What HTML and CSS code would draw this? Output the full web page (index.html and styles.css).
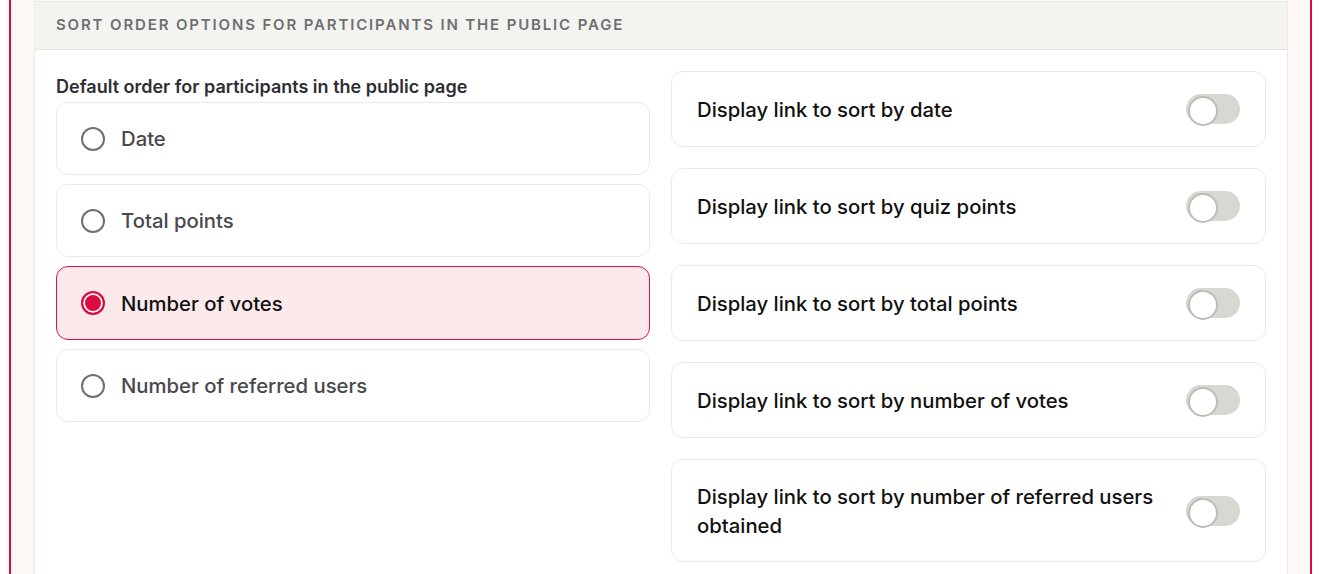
FILE: index.html
```html
<!DOCTYPE html>
<html lang="en">
<head>
    <meta charset="UTF-8">
    <meta name="viewport" content="width=device-width, initial-scale=1.0">
    <title>Sort order options</title>
    <link rel="stylesheet" href="styles.css">
</head>
<body>
    <div class="frame">
        <div class="panel">
            <div class="panel-header">Sort order options for participants in the public page</div>

            <div class="panel-body">
                <div class="column">
                    <div class="field-label">Default order for participants in the public page</div>
                    <div class="options">
                        <label class="option">
                            <span class="radio"></span>
                            Date
                        </label>
                        <label class="option">
                            <span class="radio"></span>
                            Total points
                        </label>
                        <label class="option selected">
                            <span class="radio"></span>
                            Number of votes
                        </label>
                        <label class="option">
                            <span class="radio"></span>
                            Number of referred users
                        </label>
                    </div>
                </div>

                <div class="column switches">
                    <div class="switch-row">
                        <span>Display link to sort by date</span>
                        <span class="toggle"></span>
                    </div>
                    <div class="switch-row">
                        <span>Display link to sort by quiz points</span>
                        <span class="toggle"></span>
                    </div>
                    <div class="switch-row">
                        <span>Display link to sort by total points</span>
                        <span class="toggle"></span>
                    </div>
                    <div class="switch-row">
                        <span>Display link to sort by number of votes</span>
                        <span class="toggle"></span>
                    </div>
                    <div class="switch-row tall">
                        <span>Display link to sort by number of referred users obtained</span>
                        <span class="toggle"></span>
                    </div>
                </div>
            </div>
        </div>
    </div>
</body>
</html>
```

FILE: styles.css
```css
* {
    box-sizing: border-box;
}

body {
    font-family: Inter, "Noto Sans", sans-serif;
    margin: 0;
    padding: 0;
    background-color: #ffffff;
    color: #222;
}

.frame {
    margin-left: 9px;
    width: 1303px;
    min-height: 574px;
    border-left: 2px solid #dc0a3f;
    border-right: 2px solid #dc0a3f;
    background-color: #fdf8f5;
    padding: 1px 22px 0 23px;
}

.panel {
    background-color: #ffffff;
    border: 1px solid #ebebe6;
    border-radius: 0 0 12px 12px;
    min-height: 600px;
}

.panel-header {
    background-color: #f3f3ef;
    border-bottom: 1px solid #e6e6e0;
    height: 48px;
    line-height: 46px;
    padding: 0 21px;
    font-size: 15px;
    font-weight: 600;
    letter-spacing: 1.85px;
    text-transform: uppercase;
    color: #6f6f73;
}

.panel-body {
    display: grid;
    grid-template-columns: 594px 595px;
    column-gap: 21px;
    padding: 21px 21px 0 21px;
}

.field-label {
    font-size: 18px;
    font-weight: 600;
    color: #2e2e33;
    margin-top: 5px;
    line-height: 22px;
    margin-bottom: 4px;
}

.options {
    display: flex;
    flex-direction: column;
    gap: 9px;
}

.option {
    display: flex;
    align-items: center;
    gap: 16px;
    height: 73px;
    padding: 0 24px;
    border: 1px solid #ebebe6;
    border-radius: 12px;
    font-size: 20.3px;
    font-weight: 500;
    color: #48484d;
}

.option .radio {
    width: 24px;
    height: 24px;
    border: 2px solid #707070;
    border-radius: 50%;
    background-color: #ffffff;
}

.option.selected {
    background-color: #fbe9ec;
    border-color: #d8124a;
    color: #111;
    height: 74px;
}

.option.selected .radio {
    border-color: #dc0a3f;
    box-shadow: inset 0 0 0 2px #ffffff;
    background-color: #dc0a3f;
}

.switches {
    display: flex;
    flex-direction: column;
    gap: 21px;
}

.switch-row {
    display: flex;
    align-items: center;
    justify-content: space-between;
    height: 76px;
    padding: 0 25px;
    border: 1px solid #ebebe6;
    border-radius: 12px;
    font-size: 20.3px;
    font-weight: 500;
    color: #111;
    line-height: 29px;
}

.switch-row.tall {
    height: 103px;
}

.switch-row.tall span:first-child {
    max-width: 470px;
}

.toggle {
    position: relative;
    flex-shrink: 0;
    width: 54px;
    height: 30px;
    border-radius: 15px;
    background-color: #d8d8d2;
}

/* knob sits over the track */
.toggle::after {
    content: "";
    position: absolute;
    left: 2px;
    top: 2px;
    width: 26px;
    height: 26px;
    border-radius: 50%;
    background-color: #ffffff;
    border: 2px solid #bdbdb7;
}
```
